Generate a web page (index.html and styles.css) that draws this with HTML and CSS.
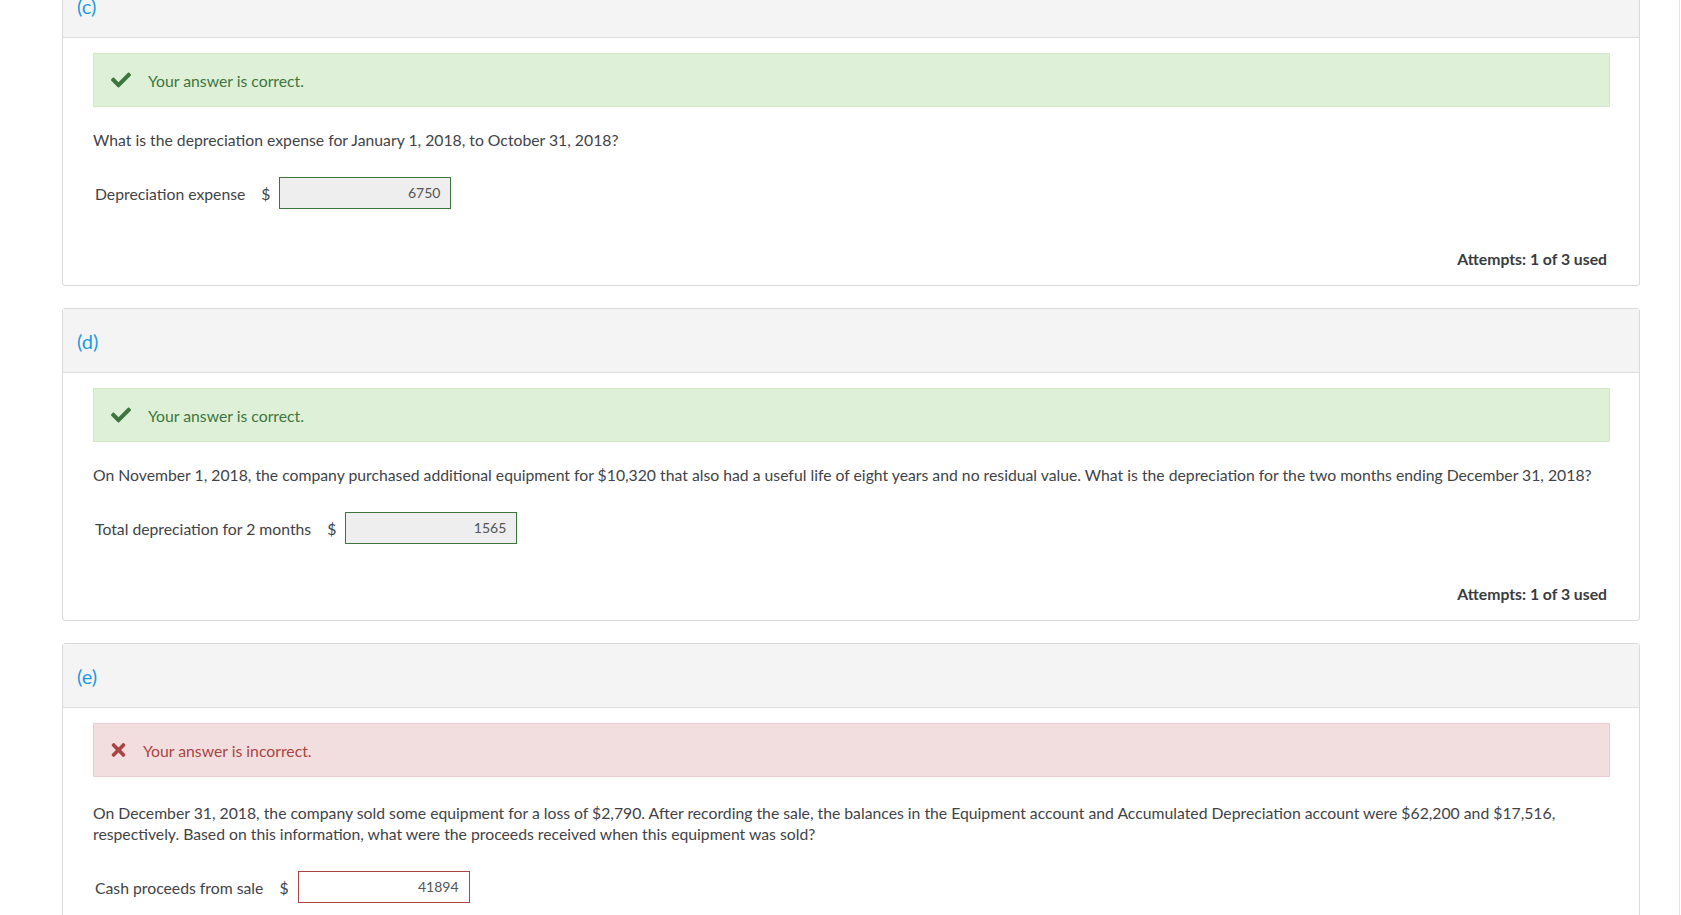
FILE: index.html
```html
<!DOCTYPE html>
<html lang="en">
<head>
  <meta charset="UTF-8">
  <title>Question parts</title>
  <link rel="stylesheet" href="styles.css">
</head>
<body>
  <div class="page">

    <!-- Part (c) -->
    <div class="part part-first">
      <div class="part-header"><span class="part-label">(c)</span></div>
      <div class="part-body">
        <div class="alert alert-success">
          <svg class="alert-icon icon-check" viewBox="0 0 512 512"><path d="M173.9 439.4l-166.4-166.4c-10-10-10-26.2 0-36.2l36.2-36.2c10-10 26.2-10 36.2 0L192 312.7 432.1 72.6c10-10 26.2-10 36.2 0l36.2 36.2c10 10 10 26.2 0 36.2l-294.4 294.4c-10 10-26.2 10-36.2 0z"/></svg>
          <span>Your answer is correct.</span>
        </div>
        <p class="question">What is the depreciation expense for January 1, 2018, to October 31, 2018?</p>
        <div class="answer-row">
          <span class="answer-label">Depreciation expense</span>
          <span class="currency">$</span>
          <div class="answer-input is-correct">6750</div>
        </div>
        <div class="attempts">Attempts: 1 of 3 used</div>
      </div>
    </div>

    <!-- Part (d) -->
    <div class="part">
      <div class="part-header"><span class="part-label">(d)</span></div>
      <div class="part-body">
        <div class="alert alert-success">
          <svg class="alert-icon icon-check" viewBox="0 0 512 512"><path d="M173.9 439.4l-166.4-166.4c-10-10-10-26.2 0-36.2l36.2-36.2c10-10 26.2-10 36.2 0L192 312.7 432.1 72.6c10-10 26.2-10 36.2 0l36.2 36.2c10 10 10 26.2 0 36.2l-294.4 294.4c-10 10-26.2 10-36.2 0z"/></svg>
          <span>Your answer is correct.</span>
        </div>
        <p class="question">On November 1, 2018, the company purchased additional equipment for $10,320 that also had a useful life of eight years and no residual value. What is the depreciation for the two months ending December 31, 2018?</p>
        <div class="answer-row">
          <span class="answer-label">Total depreciation for 2 months</span>
          <span class="currency">$</span>
          <div class="answer-input is-correct">1565</div>
        </div>
        <div class="attempts">Attempts: 1 of 3 used</div>
      </div>
    </div>

    <!-- Part (e) -->
    <div class="part">
      <div class="part-header"><span class="part-label">(e)</span></div>
      <div class="part-body">
        <div class="alert alert-danger">
          <svg class="alert-icon icon-times" viewBox="0 0 352 512"><path d="M242.7 256l100.1-100.1c12.3-12.3 12.3-32.2 0-44.5l-22.2-22.2c-12.3-12.3-32.2-12.3-44.5 0L176 189.3 75.9 89.2c-12.3-12.3-32.2-12.3-44.5 0L9.2 111.4c-12.3 12.3-12.3 32.2 0 44.5L109.3 256 9.2 356.1c-12.3 12.3-12.3 32.2 0 44.5l22.2 22.2c12.3 12.3 32.2 12.3 44.5 0L176 322.7l100.1 100.1c12.3 12.3 32.2 12.3 44.5 0l22.2-22.2c12.3-12.3 12.3-32.2 0-44.5L242.7 256z"/></svg>
          <span>Your answer is incorrect.</span>
        </div>
        <p class="question question-long">On December 31, 2018, the company sold some equipment for a loss of $2,790. After recording the sale, the balances in the Equipment account and Accumulated Depreciation account were $62,200 and $17,516, respectively. Based on this information, what were the proceeds received when this equipment was sold?</p>
        <div class="answer-row">
          <span class="answer-label">Cash proceeds from sale</span>
          <span class="currency">$</span>
          <div class="answer-input is-incorrect">41894</div>
        </div>
        <div class="attempts">Attempts: 1 of 3 used</div>
      </div>
    </div>

  </div>
</body>
</html>
```

FILE: styles.css
```css
/* General */
body {
  margin: 0;
  padding: 0;
  background: #fff;
  font-family: Lato, "Open Sans", sans-serif;
  font-size: 15.75px;
  color: #3f4348;
}

.page {
  display: flow-root;
  width: 1680px;
  min-height: 1000px;
  box-sizing: border-box;
  padding: 0 39px 0 62px;
  border-right: 1px solid #e4e4e4;
}

/* Question part card */
.part {
  border: 1px solid #dadada;
  border-radius: 3px;
  margin-bottom: 22px;
  background: #fff;
}

.part-first {
  margin-top: -27px;
}

.part-header {
  height: 63px;
  display: flex;
  align-items: center;
  padding-left: 14px;
  background: #f4f4f4;
  border-bottom: 1px solid #dedede;
}

.part-label {
  font-size: 20px;
  color: #1c9be2;
}

.part-body {
  padding: 15px 29px 15px 30px;
}

/* Feedback alerts */
.alert {
  height: 52px;
  display: flex;
  align-items: center;
  padding-left: 17px;
}

.alert-success {
  background: #dff0d8;
  border: 1px solid #d3e8c6;
  color: #3c763d;
}

.alert-danger {
  background: #f2dede;
  border: 1px solid #ebccd1;
  color: #a94442;
}

.alert-icon {
  fill: currentColor;
  flex: none;
}

.icon-check {
  width: 20px;
  height: 20px;
  margin-right: 17px;
}

.icon-times {
  width: 15px;
  height: 20px;
  margin-right: 17px;
}

/* Question text and answer */
.question {
  margin: 22px 0 0 0;
  line-height: 21px;
}

.question-long {
  margin-top: 25px;
}

.answer-row {
  display: flex;
  align-items: center;
  margin-top: 27px;
  padding-left: 2px;
}

.answer-label {
  margin-right: 16px;
}

.currency {
  margin-right: 9px;
}

.answer-input {
  width: 160px;
  height: 30px;
  line-height: 30px;
  padding-right: 10px;
  text-align: right;
  font-size: 14px;
  color: #555;
}

.answer-input.is-correct {
  background: #eee;
  border: 1px solid #3c763d;
}

.answer-input.is-incorrect {
  background: #fff;
  border: 1px solid #a94442;
}

.attempts {
  margin-top: 39px;
  text-align: right;
  padding-right: 3px;
  line-height: 22px;
  font-weight: bold;
  color: #383c40;
}
```
